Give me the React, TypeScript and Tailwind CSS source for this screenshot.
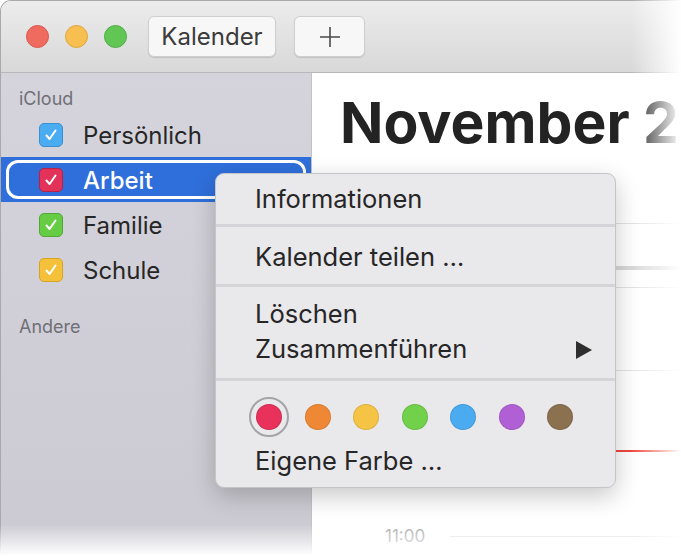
import React from "react";

const font = { fontFamily: "Inter, 'Noto Sans', sans-serif" };

function Check({ bg, border }: { bg: string; border: string }) {
  return (
    <div
      className="w-[24px] h-[24px] rounded-[5px] flex items-center justify-center border"
      style={{ backgroundColor: bg, borderColor: border }}
    >
      <svg width="16" height="16" viewBox="0 0 16 16">
        <path d="M3.5 8.5 L6.6 12 L12.5 3.5" fill="none" stroke="white" strokeWidth="2" strokeLinecap="round" strokeLinejoin="round" />
      </svg>
    </div>
  );
}

function Row({ label, bg, border }: { label: string; bg: string; border: string }) {
  return (
    <div className="h-[45px] flex items-center pl-[38px] gap-[20px]">
      <Check bg={bg} border={border} />
      <span className="text-[24px] text-[#262626] leading-none mt-[2px]">{label}</span>
    </div>
  );
}

const colors = ["#e8325b", "#ef8834", "#f6c444", "#72d14b", "#4babf1", "#b05fd4", "#8b7150"];

export default function App() {
  return (
    <div className="w-[681px] h-[556px] relative overflow-hidden bg-white" style={font}>
      <div className="w-[720px] h-[556px] flex flex-col rounded-tl-[11px] border-l border-t border-[#a9a9ab] overflow-hidden">
        {/* title bar */}
        <div className="h-[72px] shrink-0 flex items-center bg-gradient-to-b from-[#ececec] to-[#d8d8d8] border-b border-[#b8b8ba]">
          <div className="flex items-center gap-[16px] pl-[25px]">
            <div className="w-[23px] h-[23px] rounded-full bg-[#ef6a5f] border border-[#d9584e]" />
            <div className="w-[23px] h-[23px] rounded-full bg-[#f6bf4f] border border-[#dea63c]" />
            <div className="w-[23px] h-[23px] rounded-full bg-[#62c655] border border-[#50ad44]" />
          </div>
          <div className="ml-[21px] h-[41px] w-[128px] rounded-[6px] bg-[#f7f7f7] border border-[#cfcfcf] shadow-[0_1px_1px_rgba(0,0,0,0.12)] flex items-center justify-center text-[24px] text-[#3b3b3b]">
            Kalender
          </div>
          <div className="ml-[18px] h-[41px] w-[71px] rounded-[6px] bg-[#f7f7f7] border border-[#cfcfcf] shadow-[0_1px_1px_rgba(0,0,0,0.12)] flex items-center justify-center">
            <svg width="22" height="22" viewBox="0 0 22 22">
              <path d="M11 1 V21 M1 11 H21" stroke="#4a4a4a" strokeWidth="1.6" />
            </svg>
          </div>
        </div>
        {/* body */}
        <div className="flex flex-1">
          {/* sidebar */}
          <div className="w-[311px] shrink-0 bg-gradient-to-b from-[#d5d4dd] to-[#cbcad2] border-r border-[#c2c2c8] pt-[12px]">
            <div className="h-[26px] pl-[18px] flex items-center text-[18px] text-[#6f6f75]">iCloud</div>
            <div className="h-[1px]" />
            <Row label="Persönlich" bg="#4aacf1" border="#3a8fd0" />
            <div className="h-[45px] bg-[#2f6fdb] px-[5px] py-[3px]">
              <div className="h-full rounded-[12px] border-[3px] border-white flex items-center pl-[30px] gap-[20px] pr-[22px]">
                <Check bg="#e3325a" border="#b32345" />
                <span className="text-[24px] text-white leading-none font-medium mt-[2px]">Arbeit</span>
                <svg className="ml-auto" width="10" height="16" viewBox="0 0 10 16">
                  <path d="M2 2 L8 8 L2 14" fill="none" stroke="white" strokeWidth="2" strokeLinecap="round" />
                </svg>
              </div>
            </div>
            <Row label="Familie" bg="#66cc44" border="#4fa934" />
            <Row label="Schule" bg="#f6c13a" border="#d7a323" />
            <div className="mt-[21px] h-[26px] pl-[18px] flex items-center text-[18px] text-[#6f6f75]">Andere</div>
          </div>
          {/* main */}
          <div className="flex-1 bg-white flex flex-col">
            <div className="h-[150px] pl-[28px] pt-[21px]">
              <div className="text-[57px] font-bold text-[#232323] leading-none">November 2</div>
            </div>
            <div className="h-px bg-[#e2e2e2]" />
            <div className="h-[42px]" />
            <div className="h-[4px] bg-[#d9d9d9]" />
            <div className="h-[17px]" />
            <div className="h-px bg-[#e2e2e2]" />
            <div className="h-[82px]" />
            <div className="h-px bg-[#e2e2e2]" />
            <div className="h-[79px]" />
            <div className="h-[2px] bg-[#f0483c] ml-[138px]" />
            <div className="h-[76px]" />
            <div className="flex items-center">
              <div className="w-[138px] pl-[73px] text-[17px] text-[#a9a9ab] leading-none">11:00</div>
              <div className="flex-1 h-px bg-[#e2e2e2]" />
            </div>
          </div>
        </div>
      </div>

      {/* context menu */}
      <div className="absolute left-[215px] top-[173px] w-[401px] rounded-[9px] bg-[#e9e8eb] border border-[#c5c5c9] shadow-[0_8px_24px_rgba(0,0,0,0.22)] text-[25.5px] text-[#262626]">
        <div className="pt-[10px] pb-[10px]">
          <div className="h-[30px] flex items-center pl-[39px]">Informationen</div>
        </div>
        <div className="h-[3px] bg-[#d5d4d8]" />
        <div className="pt-[15px] pb-[12px]">
          <div className="h-[30px] flex items-center pl-[39px]">Kalender teilen …</div>
        </div>
        <div className="h-[3px] bg-[#d5d4d8]" />
        <div className="pt-[10px] pb-[11px]">
          <div className="h-[35px] flex items-center pl-[39px]">Löschen</div>
          <div className="h-[35px] flex items-center pl-[39px] pr-[22px]">
            <span>Zusammenführen</span>
            <svg className="ml-auto" width="18" height="20" viewBox="0 0 18 20">
              <polygon points="1,1 17,10 1,19" fill="#2e2e2e" />
            </svg>
          </div>
        </div>
        <div className="h-[3px] bg-[#d5d4d8]" />
        <div className="pt-[16px] pb-[11px]">
          <div className="h-[40px] flex items-center pl-[33px] gap-[8.5px]">
            {colors.map((c, i) => (
              <div
                key={c}
                className={
                  i === 0
                    ? "w-[40px] h-[40px] rounded-full border-2 border-[#a4a4a8] flex items-center justify-center"
                    : "w-[40px] h-[40px] flex items-center justify-center"
                }
              >
                <div className="w-[26px] h-[26px] rounded-full border border-black/10" style={{ backgroundColor: c }} />
              </div>
            ))}
          </div>
          <div className="h-[30px] mt-[9px] flex items-center pl-[39px]">Eigene Farbe …</div>
        </div>
      </div>

      {/* fades */}
      <div className="absolute top-0 right-0 w-[50px] h-full bg-gradient-to-r from-white/0 to-white pointer-events-none" />
      <div className="absolute left-0 bottom-0 w-full h-[32px] bg-gradient-to-b from-white/0 to-white pointer-events-none" />
    </div>
  );
}
